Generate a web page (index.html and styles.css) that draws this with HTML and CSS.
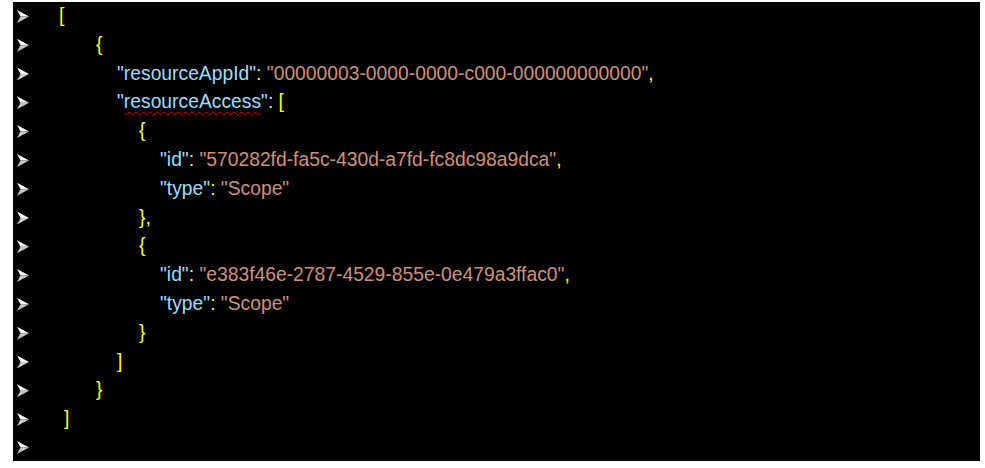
FILE: index.html
```html
<!DOCTYPE html>
<html>
<head>
<meta charset="utf-8">
<link rel="stylesheet" href="styles.css">
</head>
<body>
<div class="code">
  <div class="line"><span class="bullet"></span><span class="txt i1"><span class="p">[</span></span></div>
  <div class="line"><span class="bullet"></span><span class="txt i2"><span class="p">{</span></span></div>
  <div class="line"><span class="bullet"></span><span class="txt i3"><span class="k">"resourceAppId"</span><span class="p">: </span><span class="s">"00000003-0000-0000-c000-000000000000"</span><span class="p">,</span></span></div>
  <div class="line"><span class="bullet"></span><span class="txt i3"><span class="k">"<span class="spell">resourceAccess</span>"</span><span class="p">: [</span></span></div>
  <div class="line"><span class="bullet"></span><span class="txt i4"><span class="p">{</span></span></div>
  <div class="line"><span class="bullet"></span><span class="txt i5"><span class="k">"id"</span><span class="p">: </span><span class="s">"570282fd-fa5c-430d-a7fd-fc8dc98a9dca"</span><span class="p">,</span></span></div>
  <div class="line"><span class="bullet"></span><span class="txt i5"><span class="k">"type"</span><span class="p">: </span><span class="s">"Scope"</span></span></div>
  <div class="line"><span class="bullet"></span><span class="txt i4"><span class="p">},</span></span></div>
  <div class="line"><span class="bullet"></span><span class="txt i4"><span class="p">{</span></span></div>
  <div class="line"><span class="bullet"></span><span class="txt i5"><span class="k">"id"</span><span class="p">: </span><span class="s">"e383f46e-2787-4529-855e-0e479a3ffac0"</span><span class="p">,</span></span></div>
  <div class="line"><span class="bullet"></span><span class="txt i5"><span class="k">"type"</span><span class="p">: </span><span class="s">"Scope"</span></span></div>
  <div class="line"><span class="bullet"></span><span class="txt i4"><span class="p">}</span></span></div>
  <div class="line"><span class="bullet"></span><span class="txt i3"><span class="p">]</span></span></div>
  <div class="line"><span class="bullet"></span><span class="txt i2"><span class="p">}</span></span></div>
  <div class="line"><span class="bullet"></span><span class="txt i0"><span class="p">]</span></span></div>
  <div class="line"><span class="bullet"></span><span class="txt"></span></div>
</div>
</body>
</html>
```
FILE: styles.css
```css
html, body {
  margin: 0;
  padding: 0;
  background: #ffffff;
}
.code {
  margin: 2px 0 0 13px;
  width: 967px;
  height: 459px;
  overflow: hidden;
  background: #000000;
  font-family: "Liberation Sans", Arial, sans-serif;
  font-size: 19.3px;
  display: flex;
  flex-direction: column;
}
.line {
  height: 28.8px;
  line-height: 28.8px;
  display: flex;
  align-items: center;
  white-space: pre;
}
.bullet {
  flex: none;
  width: 12px;
  height: 13px;
  margin-left: 4px;
  background:
    linear-gradient(to bottom, transparent 0, transparent 100%);
  position: relative;
}
.bullet::before {
  content: "";
  position: absolute;
  inset: 0;
  background: #ffffff;
  clip-path: polygon(0 0, 100% 50%, 30% 50%);
}
.bullet::after {
  content: "";
  position: absolute;
  inset: 0;
  background: #c8c8c8;
  clip-path: polygon(30% 50%, 100% 50%, 0 100%);
}
.txt { display: block; }
.i1 { margin-left: 30px; }
.i0 { margin-left: 35px; }
.i2 { margin-left: 67px; }
.i3 { margin-left: 88px; }
.i4 { margin-left: 110px; }
.i5 { margin-left: 131px; }
.p { color: #ffff00; }
.k { color: #9cdcfe; }
.s { color: #ce9178; }
.spell {
  text-decoration: underline wavy #e00000;
  text-decoration-thickness: 1px;
  text-underline-offset: 3px;
}
```
